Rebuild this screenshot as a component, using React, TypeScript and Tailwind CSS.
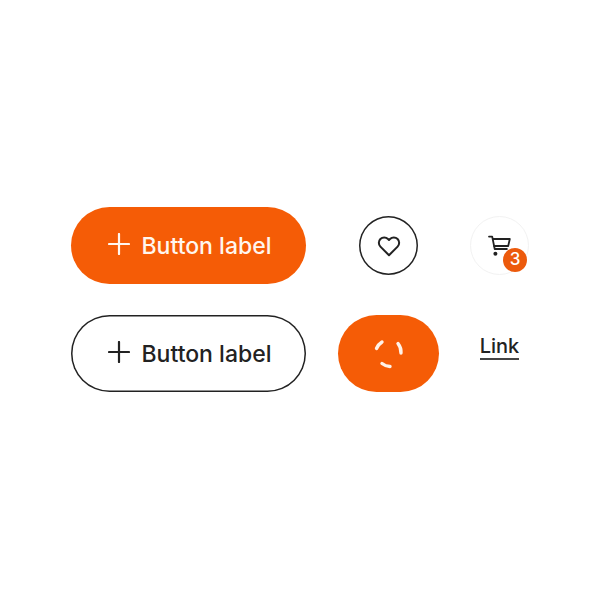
const INK = "#222222";

function PlusIcon() {
  return (
    <svg className="-mt-[3px]" width="22" height="22" viewBox="0 0 22 22" fill="none" stroke="currentColor" strokeWidth="2.2" strokeLinecap="round">
      <path d="M11 1v20M1 11h20" />
    </svg>
  );
}

function LabelButton({ filled }: { filled: boolean }) {
  return (
    <button
      className={
        filled
          ? "flex h-[77px] w-[235px] items-center justify-center gap-3 rounded-full bg-[#f55c06] pl-[2px] text-[#fff6ef]"
          : "flex h-[77px] w-[235px] items-center justify-center gap-3 rounded-full bg-white pl-[2px] text-[#222222] inset-ring-[1.5px] inset-ring-[#222222]"
      }
    >
      <PlusIcon />
      <span className="mt-[2px] text-[23px] font-medium leading-none">Button label</span>
    </button>
  );
}

function HeartIcon() {
  return (
    <svg width="24" height="22" viewBox="0 0 24 22" fill="none" stroke={INK} strokeWidth="2" strokeLinejoin="round">
      <path d="M12 20.2 3.4 11.6a5.4 5.4 0 0 1 0-7.6 5.4 5.4 0 0 1 7.6 0l1 1 1-1a5.4 5.4 0 0 1 7.6 0 5.4 5.4 0 0 1 0 7.6z" />
    </svg>
  );
}

function CartIcon() {
  return (
    <svg width="24" height="24" viewBox="0 0 24 24" fill="none" stroke={INK} strokeWidth="1.8" strokeLinejoin="round" strokeLinecap="round">
      <path d="M1 2.6h3.2l2.5 12.4h12.2" />
      <path d="M4.8 5h17l-1.6 7H6.2" />
      <circle cx="7.4" cy="19.8" r="2" fill={INK} stroke="none" />
    </svg>
  );
}

function Spinner() {
  return (
    <svg width="40" height="40" viewBox="0 0 40 40" fill="none" stroke="#fff2e8" strokeWidth="3.4" strokeLinecap="round">
      <path d="M7.5 14.5A14 14 0 0 1 13 8" />
      <path d="M29 9.5A14 14 0 0 1 32 19" />
      <path d="M21 32.5A14 14 0 0 1 13 29.5" />
    </svg>
  );
}

export default function App() {
  return (
    <div className="flex h-[600px] w-[600px] items-start bg-white pl-[71px] pt-[207px] font-['Inter',sans-serif]">
      <div className="grid grid-cols-[267px_132px_59px] items-center justify-items-start gap-y-[31px]">
        <LabelButton filled />
        <button className="ml-[21px] flex h-[59px] w-[59px] items-center justify-center rounded-full inset-ring-[1.5px] inset-ring-[#222222]">
          <HeartIcon />
        </button>
        <button className="relative flex h-[59px] w-[59px] items-center justify-center rounded-full border border-[#f2f2f2]">
          <CartIcon />
          <span className="absolute bottom-[2px] right-[1px] flex h-6 w-6 items-center justify-center rounded-full bg-[#ec5a0c] text-[17px] font-medium text-white">
            3
          </span>
        </button>
        <LabelButton filled={false} />
        <button className="flex h-[77px] w-[101px] items-center justify-center rounded-full bg-[#f55c06]">
          <Spinner />
        </button>
        <a className="mb-[13px] justify-self-center border-b-[2px] border-[#444444] text-[20px] font-medium leading-[24px] text-[#222222]">
          Link
        </a>
      </div>
    </div>
  );
}
